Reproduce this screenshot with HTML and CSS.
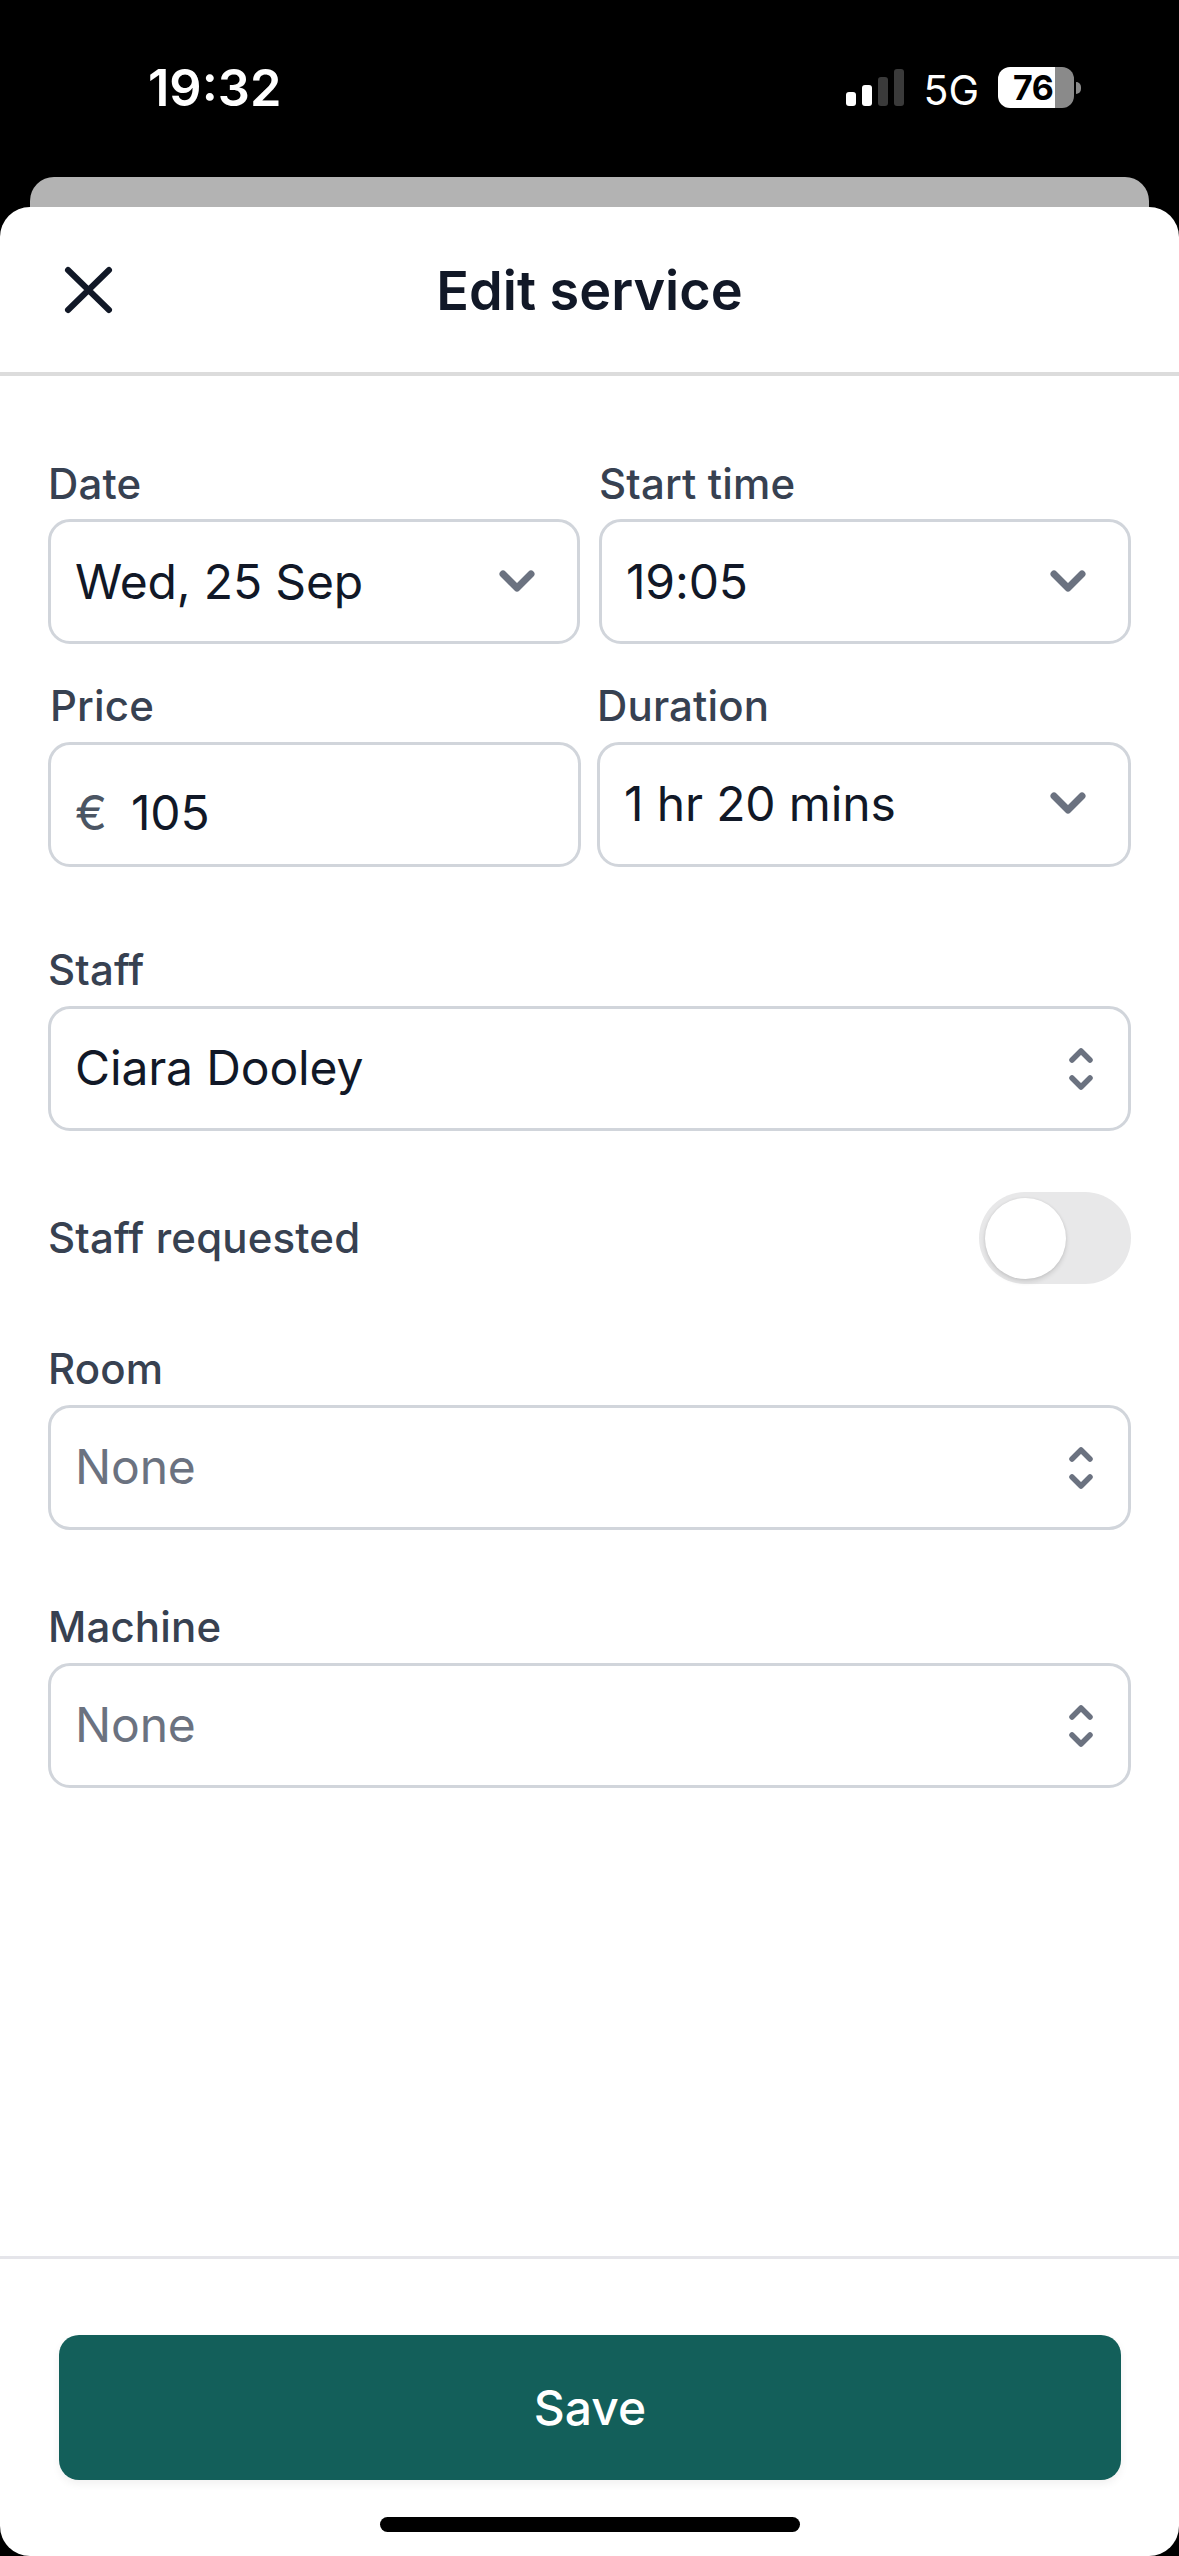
FILE: index.html
```html
<!DOCTYPE html>
<html lang="en">
<head>
<meta charset="utf-8">
<title>Edit service</title>
<link rel="stylesheet" href="styles.css">
</head>
<body>
<div class="screen">
  <div class="statusbar">
    <span class="time">19:32</span>
    <div class="status-right">
      <div class="signal"><i class="bar b1"></i><i class="bar b2"></i><i class="bar b3"></i><i class="bar b4"></i></div>
      <span class="net">5G</span>
      <div class="battery"><div class="battery-body"><span class="battery-text">76</span></div><i class="battery-tip"></i></div>
    </div>
  </div>
  <div class="peek"></div>
  <main class="sheet">
    <header class="sheet-head">
      <svg class="close" viewBox="0 0 51 50" width="51" height="50"><path d="M5 5 L46 45 M46 5 L5 45" fill="none" stroke="#111827" stroke-width="6" stroke-linecap="round"/></svg>
      <h1 class="title">Edit service</h1>
      <span></span>
    </header>
    <section class="form">
      <div class="row row-a">
        <div class="field">
          <label class="label">Date</label>
          <div class="box"><span class="value">Wed, 25 Sep</span>
            <svg class="chev" viewBox="0 0 36 24" width="36" height="24"><path d="M4 4 L18 18 L32 4" fill="none" stroke="#6b7280" stroke-width="7" stroke-linecap="round" stroke-linejoin="round"/></svg></div>
        </div>
        <div class="field">
          <label class="label">Start time</label>
          <div class="box"><span class="value">19:05</span>
            <svg class="chev" viewBox="0 0 36 24" width="36" height="24"><path d="M4 4 L18 18 L32 4" fill="none" stroke="#6b7280" stroke-width="7" stroke-linecap="round" stroke-linejoin="round"/></svg></div>
        </div>
      </div>
      <div class="row row-b">
        <div class="field">
          <label class="label label-price">Price</label>
          <div class="box box-price"><span class="currency">€</span><span class="value">105</span></div>
        </div>
        <div class="field">
          <label class="label">Duration</label>
          <div class="box"><span class="value">1 hr 20 mins</span>
            <svg class="chev" viewBox="0 0 36 24" width="36" height="24"><path d="M4 4 L18 18 L32 4" fill="none" stroke="#6b7280" stroke-width="7" stroke-linecap="round" stroke-linejoin="round"/></svg></div>
        </div>
      </div>
      <div class="field staff">
        <label class="label">Staff</label>
        <div class="box"><span class="value">Ciara Dooley</span>
          <svg class="updown" viewBox="0 0 24 42" width="24" height="42"><path d="M3 12 L12 3 L21 12 M3 30 L12 39 L21 30" fill="none" stroke="#6b7280" stroke-width="5.5" stroke-linecap="round" stroke-linejoin="round"/></svg></div>
      </div>
      <div class="toggle-row">
        <span class="label">Staff requested</span>
        <div class="toggle"><div class="thumb"></div></div>
      </div>
      <div class="field room">
        <label class="label">Room</label>
        <div class="box"><span class="value placeholder">None</span>
          <svg class="updown" viewBox="0 0 24 42" width="24" height="42"><path d="M3 12 L12 3 L21 12 M3 30 L12 39 L21 30" fill="none" stroke="#6b7280" stroke-width="5.5" stroke-linecap="round" stroke-linejoin="round"/></svg></div>
      </div>
      <div class="field machine">
        <label class="label">Machine</label>
        <div class="box"><span class="value placeholder">None</span>
          <svg class="updown" viewBox="0 0 24 42" width="24" height="42"><path d="M3 12 L12 3 L21 12 M3 30 L12 39 L21 30" fill="none" stroke="#6b7280" stroke-width="5.5" stroke-linecap="round" stroke-linejoin="round"/></svg></div>
      </div>
    </section>
    <footer class="sheet-foot">
      <button class="save">Save</button>
    </footer>
    <div class="home"></div>
  </main>
</div>
</body>
</html>
```
FILE: styles.css
```css
* { box-sizing: border-box; }
html, body { margin: 0; padding: 0; background: #000; }
body { width: 1179px; height: 2556px; overflow: hidden; font-family: Inter, "Liberation Sans", sans-serif; }
.screen { width: 1179px; height: 2556px; display: flex; flex-direction: column; background: #000; }

.statusbar { height: 177px; flex: none; display: flex; justify-content: space-between; padding: 60px 98px 0 148px; color: #fff; }
.time { font-size: 50.5px; font-weight: 600; line-height: 56px; }
.status-right { display: flex; align-items: flex-start; height: 50px; margin-top: 7px; }
.signal { display: flex; align-items: flex-end; gap: 6px; width: 58px; height: 37px; margin-top: 2px; }
.bar { width: 10px; border-radius: 3px; background: #fff; display: block; }
.b1 { height: 14px; }
.b2 { height: 21px; }
.b3 { height: 29px; background: #3a3a3a; }
.b4 { height: 37px; background: #3a3a3a; }
.net { margin-left: 19px; font-size: 41px; font-weight: 400; line-height: 46px; }
.battery { display: flex; align-items: center; margin-left: 19px; }
.battery-body { width: 76px; height: 41px; border-radius: 12px; background: linear-gradient(90deg, #fff 0, #fff 75%, #8a8a8a 75%, #8a8a8a 100%); color: #000; padding-left: 15px; font-size: 34px; font-weight: 700; line-height: 41px; letter-spacing: -0.5px; }
.battery-tip { display: block; width: 5px; height: 12px; margin-left: 2px; background: #8a8a8a; border-radius: 0 6px 6px 0; }

.peek { height: 30px; flex: none; margin: 0 30px; background: #b3b3b3; border-radius: 24px 24px 0 0; }

.sheet { position: relative; flex: 1; display: flex; flex-direction: column; background: #fff; border-radius: 30px; }
.sheet-head { flex: none; height: 169px; border-bottom: 4px solid #dcdcdc; display: grid; grid-template-columns: 1fr auto 1fr; align-items: center; padding-left: 63px; padding-right: 63px; }
.close { display: block; }
.title { margin: 0; padding-top: 2px; font-size: 54px; font-weight: 600; line-height: 60px; color: #111827; }

.form { flex: 1; padding: 78px 48px 0 48px; }
.row { display: grid; }
.row-a { grid-template-columns: 532px 532px; column-gap: 19px; }
.row-b { grid-template-columns: 533px 534px; column-gap: 16px; margin-top: 32px; }
.label { display: block; font-size: 42px; font-weight: 500; line-height: 60px; letter-spacing: 0.15px; color: #374151; margin-bottom: 6px; }
.row-a .label { margin-bottom: 5px; }
.label-price { padding-left: 2px; }
.box { height: 125px; border: 3px solid #d1d5db; border-radius: 22px; background: #fff; display: flex; align-items: center; justify-content: space-between; padding: 0 24px 2px; }
.row-a .box { padding-bottom: 0; }
.value { font-size: 48px; font-weight: 400; line-height: 58px; letter-spacing: -0.15px; color: #111827; }
.placeholder { color: #6b7280; }
.chev { margin-right: 18px; display: block; }
.row-a .chev { margin-top: 0; }
.updown { margin-right: 11px; margin-top: 2px; display: block; }
.box-price { justify-content: flex-start; padding-top: 18px; }
.currency { font-size: 48px; line-height: 58px; color: #4b5563; width: 56px; }

.staff { margin-top: 73px; }
.toggle-row { display: flex; align-items: center; justify-content: space-between; height: 92px; margin-top: 61px; }
.toggle-row .label { margin: 0; }
.toggle { width: 152px; height: 92px; border-radius: 46px; background: #e8e8e9; padding: 6px; }
.thumb { width: 81px; height: 81px; border-radius: 50%; background: #fff; box-shadow: 0 3px 5px rgba(0,0,0,.12), 0 0 3px rgba(0,0,0,.08); }
.room { margin-top: 55px; }
.machine { margin-top: 67px; }

.sheet-foot { flex: none; border-top: 3px solid #e5e5ea; padding: 76px 58px 76px 59px; }
.save { display: block; width: 100%; height: 145px; border: 0; border-radius: 20px; background: #135f5a; color: #fff; font-family: Inter, "Liberation Sans", sans-serif; font-size: 48px; font-weight: 500; box-shadow: 0 4px 8px rgba(0,0,0,.06); }
.home { position: absolute; left: 380px; bottom: 24px; width: 420px; height: 15px; border-radius: 8px; background: #000; }
```
